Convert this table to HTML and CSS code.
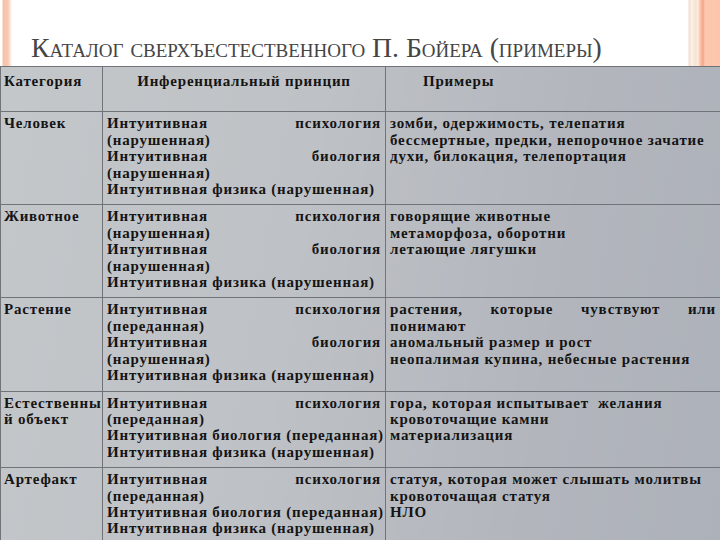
FILE: index.html
```html
<!DOCTYPE html>
<html>
<head>
<meta charset="utf-8">
<title>Каталог сверхъестественного</title>
<link rel="stylesheet" href="styles.css">
</head>
<body>
<div class="slide">
  <header class="title-bar">
    <h1 class="title">Каталог сверхъестественного П. Бойера (примеры)</h1>
  </header>
  <table class="catalog">
    <colgroup>
      <col class="c1"><col class="c2"><col class="c3">
    </colgroup>
    <thead>
      <tr>
        <th class="h1">Категория</th>
        <th class="h2">Инференциальный принцип</th>
        <th class="h3">Примеры</th>
      </tr>
    </thead>
    <tbody>
      <tr>
        <td class="cat">Человек</td>
        <td class="lines">
          <p><span class="jl">Интуитивная психология</span>(нарушенная)</p>
          <p><span class="jl">Интуитивная биология</span>(нарушенная)</p>
          <p>Интуитивная физика (нарушенная)</p>
        </td>
        <td class="lines">
          <p>зомби, одержимость, телепатия</p>
          <p>бессмертные, предки, непорочное зачатие</p>
          <p>духи, билокация, телепортация</p>
        </td>
      </tr>
      <tr>
        <td class="cat">Животное</td>
        <td class="lines">
          <p><span class="jl">Интуитивная психология</span>(нарушенная)</p>
          <p><span class="jl">Интуитивная биология</span>(нарушенная)</p>
          <p>Интуитивная физика (нарушенная)</p>
        </td>
        <td class="lines">
          <p>говорящие животные</p>
          <p>метаморфоза, оборотни</p>
          <p>летающие лягушки</p>
        </td>
      </tr>
      <tr>
        <td class="cat">Растение</td>
        <td class="lines">
          <p><span class="jl">Интуитивная психология</span>(переданная)</p>
          <p><span class="jl">Интуитивная биология</span>(нарушенная)</p>
          <p>Интуитивная физика (нарушенная)</p>
        </td>
        <td class="lines">
          <p><span class="jl">растения, которые чувствуют или</span>понимают</p>
          <p>аномальный размер и рост</p>
          <p>неопалимая купина, небесные растения</p>
        </td>
      </tr>
      <tr>
        <td class="cat">Естественны<br>й объект</td>
        <td class="lines">
          <p><span class="jl">Интуитивная психология</span>(переданная)</p>
          <p>Интуитивная биология (переданная)</p>
          <p>Интуитивная физика (нарушенная)</p>
        </td>
        <td class="lines">
          <p>гора, которая испытывает&nbsp; желания</p>
          <p>кровоточащие камни</p>
          <p>материализация</p>
        </td>
      </tr>
      <tr>
        <td class="cat">Артефакт</td>
        <td class="lines">
          <p><span class="jl">Интуитивная психология</span>(переданная)</p>
          <p>Интуитивная биология (переданная)</p>
          <p>Интуитивная физика (нарушенная)</p>
        </td>
        <td class="lines">
          <p>статуя, которая может слышать молитвы</p>
          <p>кровоточащая статуя</p>
          <p>НЛО</p>
        </td>
      </tr>
    </tbody>
  </table>
</div>
</body>
</html>
```
FILE: styles.css
```css
html, body {
  margin: 0;
  padding: 0;
}
body {
  width: 720px;
  height: 540px;
  overflow: hidden;
  background: #ffffff;
}
.slide {
  width: 720px;
  height: 540px;
  display: flex;
  flex-direction: column;
  overflow: hidden;
}
.title-bar {
  height: 66px;
  flex: none;
  box-sizing: border-box;
  display: flex;
  align-items: flex-end;
  padding: 0 0 2px 31px;
  background:
    linear-gradient(to right,
      #ffffff 0px, #ffffff 2px,
      #f6c2a8 3px, #f8c9b2 8px, #fbe3d6 10px, #ffffff 12px,
      #ffffff 688px,
      #f3dccd 689px, #fdf3ea 692px, #f6e2d3 695px, #fbece0 698px,
      #fcc7ae 700px, #f3a58a 703px, #fdc8b0 705px, #fcc4ab 720px);
}
.title {
  margin: 0;
  font-family: "Liberation Serif", "Times New Roman", serif;
  font-weight: normal;
  font-size: 27.7px;
  line-height: 32px;
  font-variant: small-caps;
  color: #454545;
  white-space: nowrap;
}
.catalog {
  width: 720px;
  flex: none;
  table-layout: fixed;
  border-collapse: collapse;
  font-family: "Liberation Serif", "Times New Roman", serif;
  font-weight: bold;
  font-size: 15px;
  letter-spacing: 0.8px;
  line-height: 16.4px;
  color: #141414;
  background: linear-gradient(100deg, #c4c7ca 0%, #bec1c5 40%, #b2b5bc 75%, #adb1b9 100%);
}
.c1 { width: 102px; }
.c2 { width: 283px; }
.c3 { width: 335px; }
.catalog th,
.catalog td {
  border: 1px solid #707479;
  vertical-align: top;
  text-align: left;
  white-space: nowrap;
  padding: 3px 4px 7px 4px;
}
.catalog td.cat {
  padding-left: 3px;
  padding-right: 1px;
}
.catalog th {
  font-weight: bold;
  height: 16px;
  padding-top: 6px;
  padding-bottom: 22px;
}
.catalog .h1 { padding-left: 3px; }
.catalog .h2 { text-align: center; }
.catalog .h3 { padding-left: 37px; }
.catalog td.lines p {
  margin: 0;
}
.catalog .jl {
  display: block;
  text-align: justify;
  text-align-last: justify;
}
```
